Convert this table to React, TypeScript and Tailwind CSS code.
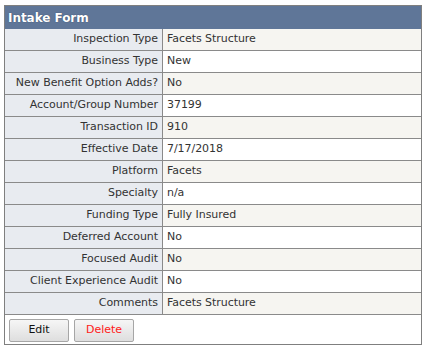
import React from 'react'

const FIELDS: [string, string][] = [
  ['Inspection Type', 'Facets Structure'],
  ['Business Type', 'New'],
  ['New Benefit Option Adds?', 'No'],
  ['Account/Group Number', '37199'],
  ['Transaction ID', '910'],
  ['Effective Date', '7/17/2018'],
  ['Platform', 'Facets'],
  ['Specialty', 'n/a'],
  ['Funding Type', 'Fully Insured'],
  ['Deferred Account', 'No'],
  ['Focused Audit', 'No'],
  ['Client Experience Audit', 'No'],
  ['Comments', 'Facets Structure'],
]

export default function App() {
  return (
    <div className="w-[427px] h-[351px] bg-white pt-[5px] pl-[4px] font-['DejaVu_Sans',Tahoma,sans-serif] text-[11px] tracking-[-0.05px] text-[#333]">
      <div className="w-[418px] h-[340px] border border-[#7f7f7f] flex flex-col">
        {/* header */}
        <div className="h-[23px] shrink-0 bg-[#5f7698] text-white font-bold text-[12px] flex items-center px-[3px] [text-shadow:0_0_1px_#2b3d5a]">
          Intake Form
        </div>

        {/* detail rows */}
        {FIELDS.map(([label, value], i) => (
          <div key={label} className="flex h-[22px] shrink-0 border-b border-[#8a8a8a]">
            <div className="w-[158px] shrink-0 bg-[#e8ebf0] border-r border-[#8a8a8a] text-right pr-[4px] flex items-center justify-end">
              {label}
            </div>
            <div className={`flex-1 flex items-center pl-[4px] ${i % 2 === 0 ? 'bg-[#f6f5f1]' : 'bg-white'}`}>
              {value}
            </div>
          </div>
        ))}

        {/* actions */}
        <div className="flex gap-[5px] px-[4px] pt-[4px]">
          <button className="w-[60px] h-[23px] rounded-[2px] border border-[#a6a6a6] bg-gradient-to-b from-[#f6f6f6] to-[#dedede] text-[#111]">
            Edit
          </button>
          <button className="w-[60px] h-[23px] rounded-[2px] border border-[#a6a6a6] bg-gradient-to-b from-[#f6f6f6] to-[#dedede] text-[#ff1a1a]">
            Delete
          </button>
        </div>
      </div>
    </div>
  )
}
